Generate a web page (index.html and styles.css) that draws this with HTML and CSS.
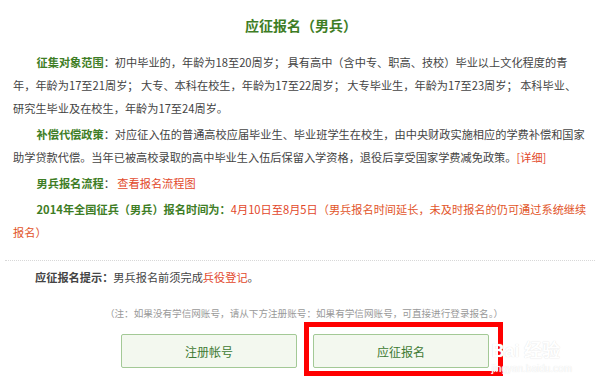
FILE: index.html
```html
<!DOCTYPE html>
<html lang="zh-CN">
<head>
    <meta charset="UTF-8">
    <link rel="stylesheet" href="styles.css">
    <title>应征报名（男兵）</title>
</head>
<body>
<div class="page">
    <h1 class="title">应征报名（男兵）</h1>

    <div class="info">
        <p class="indent"><span class="label">征集对象范围</span>：初中毕业的，年龄为18至20周岁； 具有高中（含中专、职高、技校）毕业以上文化程度的青<br>年，年龄为17至21周岁； 大专、本科在校生，年龄为17至22周岁； 大专毕业生，年龄为17至23周岁； 本科毕业、<br>研究生毕业及在校生，年龄为17至24周岁。</p>
        <p class="indent"><span class="label">补偿代偿政策</span>：对应征入伍的普通高校应届毕业生、毕业班学生在校生，由中央财政实施相应的学费补偿和国家<br>助学贷款代偿。当年已被高校录取的高中毕业生入伍后保留入学资格，退役后享受国家学费减免政策。<a class="red" href="#">[详细]</a></p>
        <p class="indent"><span class="label">男兵报名流程</span>： <a class="red" href="#">查看报名流程图</a></p>
        <p class="indent"><span class="label">2014年全国征兵（男兵）报名时间为：</span><span class="red">4月10日至8月5日</span><span class="orange">（男兵报名时间延长，未及时报名的仍可通过系统继续<br>报名）</span></p>
    </div>

    <div class="divider"></div>

    <p class="hint"><b>应征报名提示：</b>男兵报名前须完成<a class="red" href="#">兵役登记</a>。</p>

    <p class="note">（注：如果没有学信网账号，请从下方注册账号：如果有学信网账号，可直接进行登录报名。）</p>

    <div class="actions">
        <a class="btn" href="#">注册帐号</a>
        <div class="marked">
            <a class="btn" href="#">应征报名</a>
            <span class="mark"></span>
        </div>
    </div>

    <div class="watermark">
        <span class="wm-logo">Bai 经验</span>
        <span class="wm-url">jingyan.baidu.com</span>
    </div>
</div>
</body>
</html>
```

FILE: styles.css
```css
*{
    margin: 0;
    padding: 0;
    box-sizing: border-box;
}
html, body{
    height: 100%;
    background: #fff;
}
body{
    font-family: "Noto Sans CJK SC", "Noto Sans", sans-serif;
    color: #444;
    overflow: hidden;
}
a{
    text-decoration: none;
}
.page{
    position: relative;
    width: 600px;
    height: 387px;
    padding: 15px 5px 0;
}
.title{
    font-size: 14px;
    line-height: 20px;
    font-weight: bold;
    color: #3e7d25;
    text-align: center;
    margin-bottom: 16px;
    padding-left: 2px;
}
.info{
    padding: 0 8px;
}
.info p{
    font-size: 11.2px;
    line-height: 23px;
    margin-bottom: 3px;
    white-space: nowrap;
}
.indent{
    text-indent: 2.1em;
}
.label{
    color: #3e7d25;
    font-weight: bold;
}
.red{
    color: #e2472a;
}
.orange{
    color: #e2552a;
}
.divider{
    border-top: 1px dotted #d8d8d8;
    margin-top: 16px;
}
.hint{
    font-size: 11.2px;
    line-height: 23px;
    margin-top: 5px;
    padding-left: 30px;
}
.hint b{
    color: #444;
}
.note{
    font-size: 9.6px;
    line-height: 14px;
    color: #999;
    text-align: center;
    margin-top: 17px;
    padding-left: 8px;
    white-space: nowrap;
}
.actions{
    display: flex;
    justify-content: center;
    gap: 16px;
    margin-top: 14px;
    padding-left: 10px;
}
.btn{
    display: flex;
    align-items: center;
    justify-content: center;
    width: 176px;
    height: 34px;
    background: #f3f8ef;
    border: 1px solid #a3c996;
    border-radius: 2px;
    color: #3e7a33;
    font-size: 12px;
}
.marked{
    position: relative;
}
.mark{
    position: absolute;
    left: -9px;
    top: -12px;
    width: 199px;
    height: 54px;
    border: 5px solid #ff0000;
    pointer-events: none;
}
.watermark{
    position: absolute;
    right: 28px;
    bottom: 12px;
    display: flex;
    flex-direction: column;
    align-items: flex-start;
    color: #fff;
    text-shadow: 0 0 1px #dadada;
    font-family: "Liberation Sans", sans-serif;
}
.wm-logo{
    font-size: 18px;
    font-weight: bold;
    line-height: 24px;
}
.wm-url{
    font-size: 10px;
    line-height: 12px;
}
```
